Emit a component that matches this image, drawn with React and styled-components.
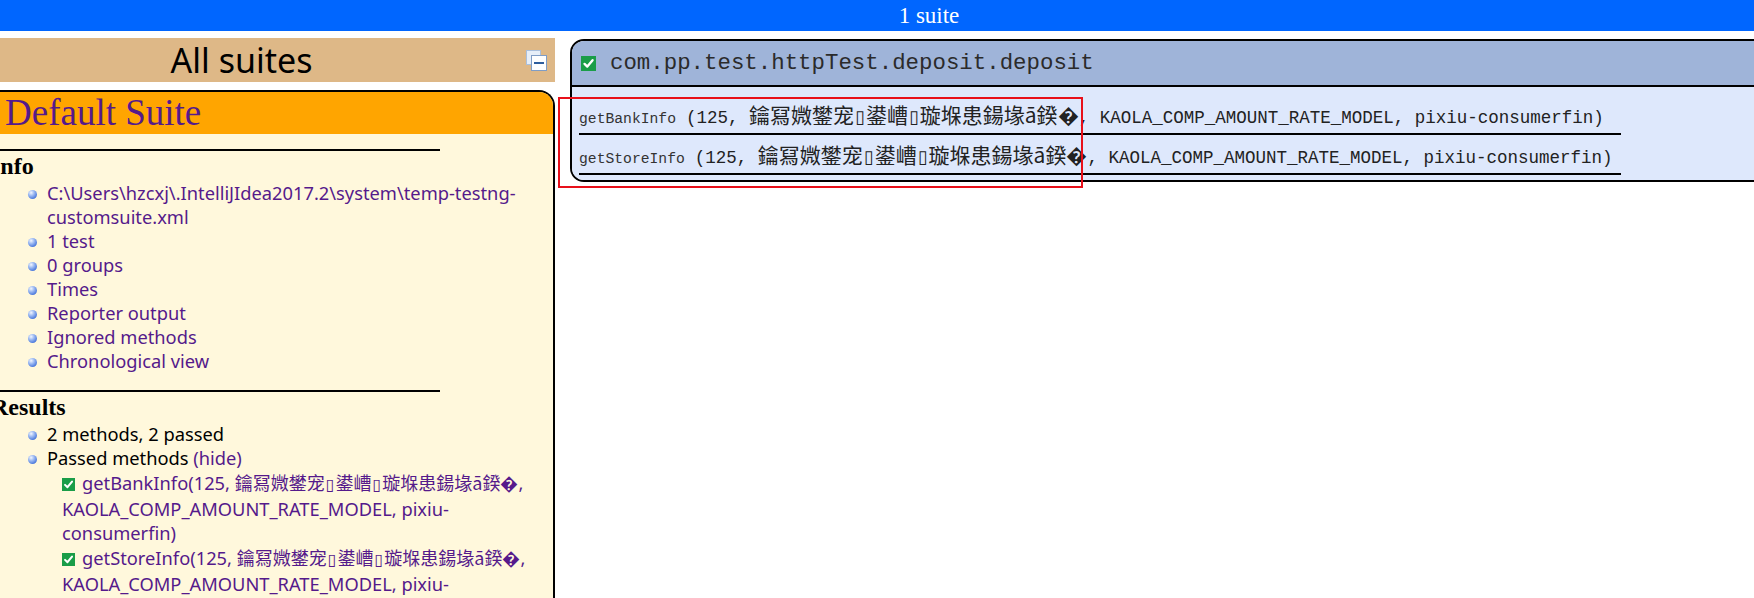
import React from "react";
import styled, { createGlobalStyle } from "styled-components";

const GlobalStyle = createGlobalStyle`
  html, body { margin: 0; padding: 0; background: #ffffff; }
  body { overflow: hidden; }
  * { box-sizing: border-box; }
`;

const Page = styled.div`
  position: relative;
  width: 1754px;
  height: 598px;
  overflow: hidden;
  background: #fff;
`;

const Banner = styled.header`
  height: 31px;
  background: #0066ff;
  color: #fff;
  font-family: "Liberation Serif", serif;
  font-size: 23px;
  display: flex;
  align-items: center;
  justify-content: center;
  padding-left: 104px;
`;

const Workspace = styled.div`
  display: flex;
  align-items: flex-start;
  gap: 15px;
  padding-top: 7px;
`;

const Navigator = styled.nav`
  flex: none;
  width: 627px;
  margin-left: -72px;
`;

const NavTitleBar = styled.div`
  height: 44px;
  background: #deb887;
  display: grid;
  grid-template-columns: 1fr auto 1fr;
  align-items: center;
`;

const NavTitle = styled.div`
  grid-column: 2;
  font-family: "Noto Sans", sans-serif;
  font-size: 34px;
  line-height: 1;
  color: #000;
`;

const CollapseButton = styled.span`
  grid-column: 3;
  justify-self: end;
  margin-right: 8px;
  display: flex;
`;

const SuiteCard = styled.section`
  margin-top: 8px;
  border: 2px solid #000;
  border-bottom: none;
  border-radius: 16px 16px 0 0;
  background: #fff8dc;
  height: 520px;
  overflow: hidden;
`;

const SuiteHeader = styled.div`
  height: 42px;
  background: #ffa500;
  padding-left: 75px;
  font-family: "Liberation Serif", serif;
  font-size: 37px;
  line-height: 42px;
  color: #551a8b;
`;

const SectionTitle = styled.h2`
  margin: ${(p) => p.$top}px 0 0 61px;
  width: 449px;
  border-top: 2px solid #000;
  font-family: "Liberation Serif", serif;
  font-weight: bold;
  font-size: 24px;
  line-height: 30px;
  color: #000;
`;

const SectionList = styled.ul`
  list-style: none;
  margin: 0;
  padding: 0 10px 0 98px;
  font-family: "Noto Sans", "Noto Sans CJK SC", sans-serif;
  font-size: 18.3px;
  line-height: 24px;
`;

const SectionItem = styled.li`
  padding-left: 19px;
  text-indent: -19px;
  color: ${(p) => (p.$link ? "#551a8b" : "#000")};
  &::before {
    content: "";
    display: inline-block;
    width: 9px;
    height: 9px;
    border-radius: 50%;
    margin-right: 10px;
    vertical-align: 1px;
    background: radial-gradient(circle at 35% 30%, #f2f6ff 0%, #9dbaf2 35%, #4a78dc 75%, #2c56b5 100%);
  }
`;

const LinkText = styled.span`
  color: #551a8b;
`;

const MethodList = styled.ul`
  list-style: none;
  margin: 0;
  padding: 0 0 0 15px;
  text-indent: 0;
`;

const MethodItem = styled.li`
  color: #551a8b;
  text-indent: 0;
  & > svg {
    vertical-align: -1px;
    margin-right: 7px;
  }
`;

const Cjk = styled.span`
  font-family: "Noto Sans CJK SC", sans-serif;
  font-size: ${(p) => p.$size}px;
`;

const Tofu = styled.span`
  font-family: "DejaVu Sans", sans-serif;
  font-size: ${(p) => p.$size}px;
  margin: 0 1px;
`;

const MainPanel = styled.section`
  flex: none;
  width: 1330px;
  margin-top: 1px;
  border: 2px solid #000;
  border-radius: 14px 0 0 14px;
  overflow: hidden;
`;

const PanelHeader = styled.div`
  height: 46px;
  display: flex;
  align-items: center;
  gap: 14px;
  padding-left: 9px;
  background: #9fb4d9;
  border-bottom: 2px solid #000;
  font-family: "Liberation Mono", monospace;
  font-size: 22.4px;
  color: #2b2b2b;
`;

const PanelContent = styled.div`
  background: #dee8fc;
  padding: 8px 7px 5px;
`;

const MethodRow = styled.div`
  width: 1042px;
  height: 40px;
  line-height: 38px;
  border-bottom: 2px solid #000;
  white-space: nowrap;
`;

const MethodName = styled.span`
  font-family: "Liberation Mono", monospace;
  font-size: 14.7px;
  color: #333;
  margin-right: 10px;
`;

const Params = styled.span`
  font-family: "Liberation Mono", "Noto Sans CJK SC", monospace;
  font-size: 17.5px;
  color: #222;
`;

const Highlight = styled.div`
  position: absolute;
  left: 558px;
  top: 97px;
  width: 525px;
  height: 91px;
  border: 2px solid #e8101a;
  pointer-events: none;
`;

const CheckIcon = ({ size = 14 }) => (
  <svg width={size} height={size} viewBox="0 0 14 14">
    <rect width="14" height="14" fill="#1a9d48" />
    <path d="M3.3 7.4 L5.9 9.9 L10.8 3.9" stroke="#fff" strokeWidth="2.2" fill="none" strokeLinecap="round" strokeLinejoin="round" />
  </svg>
);

const CollapseIcon = () => (
  <svg width="21" height="21" viewBox="0 0 21 21">
    <rect x="0.5" y="0.5" width="14" height="14" fill="#e6eef8" stroke="#a9bfdc" />
    <rect x="5.5" y="5.5" width="15" height="15" fill="#fdfeff" stroke="#7f9dc6" />
    <rect x="8" y="12" width="10" height="2" fill="#2d5d9d" />
  </svg>
);

const Garbled = ({ size, box }) => (
  <Cjk $size={size}>
    鑰冩媺鐢宠<Tofu $size={box}>▯</Tofu>鍙嶆<Tofu $size={box}>▯</Tofu>璇堢患鍚堟ā鍨{"\uFFFD"}
  </Cjk>
);

const methods = ["getBankInfo", "getStoreInfo"];

const infoItems = [
  "C:\\Users\\hzcxj\\.IntelliJIdea2017.2\\system\\temp-testng-customsuite.xml",
  "1 test",
  "0 groups",
  "Times",
  "Reporter output",
  "Ignored methods",
  "Chronological view",
];

export default function App() {
  return (
    <Page>
      <GlobalStyle />
      <Banner>1 suite</Banner>
      <Workspace>
        <Navigator>
          <NavTitleBar>
            <NavTitle>All suites</NavTitle>
            <CollapseButton>
              <CollapseIcon />
            </CollapseButton>
          </NavTitleBar>
          <SuiteCard>
            <SuiteHeader>Default Suite</SuiteHeader>
            <SectionTitle $top={15}>Info</SectionTitle>
            <SectionList>
              {infoItems.map((t) => (
                <SectionItem key={t} $link>
                  {t}
                </SectionItem>
              ))}
            </SectionList>
            <SectionTitle $top={17}>Results</SectionTitle>
            <SectionList>
              <SectionItem>2 methods, 2 passed</SectionItem>
              <SectionItem>
                Passed methods <LinkText>(hide)</LinkText>
                <MethodList>
                  {methods.map((m) => (
                    <MethodItem key={m}>
                      <CheckIcon size={13} />
                      {m}(125, <Garbled size={18} box={16} />, KAOLA_COMP_AMOUNT_RATE_MODEL, pixiu-consumerfin)
                    </MethodItem>
                  ))}
                </MethodList>
              </SectionItem>
            </SectionList>
          </SuiteCard>
        </Navigator>
        <MainPanel>
          <PanelHeader>
            <CheckIcon size={15} />
            <span>com.pp.test.httpTest.deposit.deposit</span>
          </PanelHeader>
          <PanelContent>
            {methods.map((m) => (
              <MethodRow key={m}>
                <MethodName>{m}</MethodName>
                <Params>
                  (125, <Garbled size={21} box={18} />, KAOLA_COMP_AMOUNT_RATE_MODEL, pixiu-consumerfin)
                </Params>
              </MethodRow>
            ))}
          </PanelContent>
        </MainPanel>
      </Workspace>
      <Highlight />
    </Page>
  );
}
